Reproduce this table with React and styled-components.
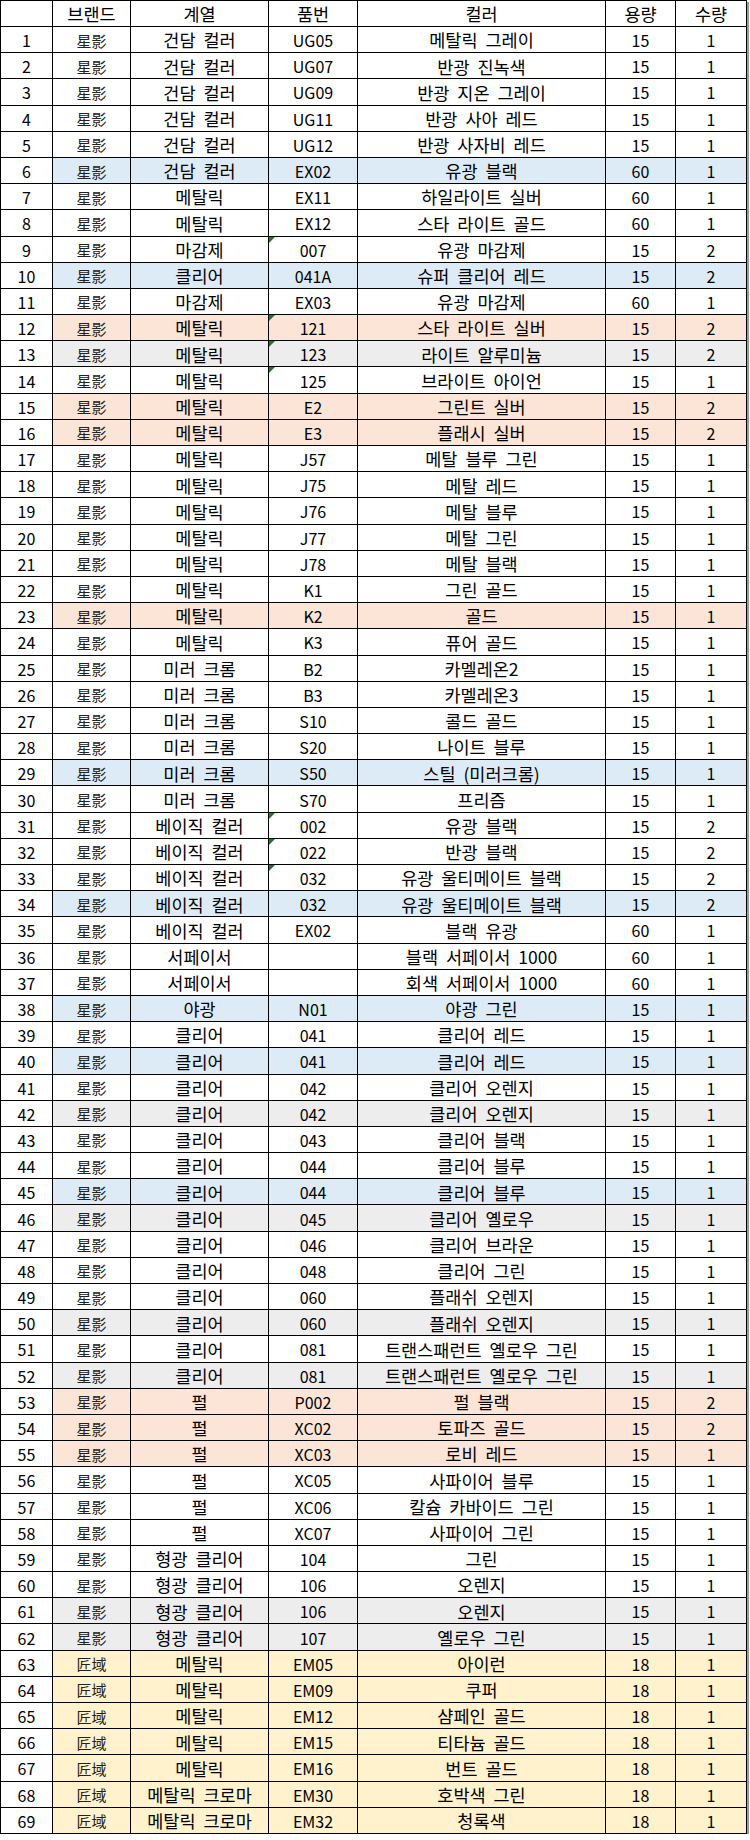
import styled, { createGlobalStyle } from "styled-components";

const GlobalStyle = createGlobalStyle`
  html, body {
    margin: 0;
    padding: 0;
    background: #fff;
  }
  body {
    font-family: "Noto Sans CJK KR", "Noto Sans", sans-serif;
    color: #000;
  }
`;

const COLS = "52px 78px 138px 89px 248px 70px 71px";

const fills = {
  b: "#ddebf7",
  p: "#fce4d6",
  g: "#ededed",
  y: "#fff2cc",
};

const head = ["", "브랜드", "계열", "품번", "컬러", "용량", "수량"];

// no, brand, series, code, colour, ml, qty, fill, text-number flag
const rows = [
  [1, "星影", "건담 컬러", "UG05", "메탈릭 그레이", 15, 1],
  [2, "星影", "건담 컬러", "UG07", "반광 진녹색", 15, 1],
  [3, "星影", "건담 컬러", "UG09", "반광 지온 그레이", 15, 1],
  [4, "星影", "건담 컬러", "UG11", "반광 사아 레드", 15, 1],
  [5, "星影", "건담 컬러", "UG12", "반광 사자비 레드", 15, 1],
  [6, "星影", "건담 컬러", "EX02", "유광 블랙", 60, 1, "b"],
  [7, "星影", "메탈릭", "EX11", "하일라이트 실버", 60, 1],
  [8, "星影", "메탈릭", "EX12", "스타 라이트 골드", 60, 1],
  [9, "星影", "마감제", "007", "유광 마감제", 15, 2, "", true],
  [10, "星影", "클리어", "041A", "슈퍼 클리어 레드", 15, 2, "b"],
  [11, "星影", "마감제", "EX03", "유광 마감제", 60, 1],
  [12, "星影", "메탈릭", "121", "스타 라이트 실버", 15, 2, "p", true],
  [13, "星影", "메탈릭", "123", "라이트 알루미늄", 15, 2, "g", true],
  [14, "星影", "메탈릭", "125", "브라이트 아이언", 15, 1, "", true],
  [15, "星影", "메탈릭", "E2", "그린트 실버", 15, 2, "p"],
  [16, "星影", "메탈릭", "E3", "플래시 실버", 15, 2, "p"],
  [17, "星影", "메탈릭", "J57", "메탈 블루 그린", 15, 1],
  [18, "星影", "메탈릭", "J75", "메탈 레드", 15, 1],
  [19, "星影", "메탈릭", "J76", "메탈 블루", 15, 1],
  [20, "星影", "메탈릭", "J77", "메탈 그린", 15, 1],
  [21, "星影", "메탈릭", "J78", "메탈 블랙", 15, 1],
  [22, "星影", "메탈릭", "K1", "그린 골드", 15, 1],
  [23, "星影", "메탈릭", "K2", "골드", 15, 1, "p"],
  [24, "星影", "메탈릭", "K3", "퓨어 골드", 15, 1],
  [25, "星影", "미러 크롬", "B2", "카멜레온2", 15, 1],
  [26, "星影", "미러 크롬", "B3", "카멜레온3", 15, 1],
  [27, "星影", "미러 크롬", "S10", "콜드 골드", 15, 1],
  [28, "星影", "미러 크롬", "S20", "나이트 블루", 15, 1],
  [29, "星影", "미러 크롬", "S50", "스틸 (미러크롬)", 15, 1, "b"],
  [30, "星影", "미러 크롬", "S70", "프리즘", 15, 1],
  [31, "星影", "베이직 컬러", "002", "유광 블랙", 15, 2, "", true],
  [32, "星影", "베이직 컬러", "022", "반광 블랙", 15, 2, "", true],
  [33, "星影", "베이직 컬러", "032", "유광 울티메이트 블랙", 15, 2, "", true],
  [34, "星影", "베이직 컬러", "032", "유광 울티메이트 블랙", 15, 2, "b"],
  [35, "星影", "베이직 컬러", "EX02", "블랙 유광", 60, 1],
  [36, "星影", "서페이서", "", "블랙 서페이서 1000", 60, 1],
  [37, "星影", "서페이서", "", "회색 서페이서 1000", 60, 1],
  [38, "星影", "야광", "N01", "야광 그린", 15, 1, "b"],
  [39, "星影", "클리어", "041", "클리어 레드", 15, 1],
  [40, "星影", "클리어", "041", "클리어 레드", 15, 1, "b"],
  [41, "星影", "클리어", "042", "클리어 오렌지", 15, 1],
  [42, "星影", "클리어", "042", "클리어 오렌지", 15, 1, "g"],
  [43, "星影", "클리어", "043", "클리어 블랙", 15, 1],
  [44, "星影", "클리어", "044", "클리어 블루", 15, 1],
  [45, "星影", "클리어", "044", "클리어 블루", 15, 1, "b"],
  [46, "星影", "클리어", "045", "클리어 옐로우", 15, 1, "g"],
  [47, "星影", "클리어", "046", "클리어 브라운", 15, 1],
  [48, "星影", "클리어", "048", "클리어 그린", 15, 1],
  [49, "星影", "클리어", "060", "플래쉬 오렌지", 15, 1],
  [50, "星影", "클리어", "060", "플래쉬 오렌지", 15, 1, "g"],
  [51, "星影", "클리어", "081", "트랜스패런트 옐로우 그린", 15, 1],
  [52, "星影", "클리어", "081", "트랜스패런트 옐로우 그린", 15, 1, "g"],
  [53, "星影", "펄", "P002", "펄 블랙", 15, 2, "p"],
  [54, "星影", "펄", "XC02", "토파즈 골드", 15, 2, "p"],
  [55, "星影", "펄", "XC03", "로비 레드", 15, 1, "p"],
  [56, "星影", "펄", "XC05", "사파이어 블루", 15, 1],
  [57, "星影", "펄", "XC06", "칼슘 카바이드 그린", 15, 1],
  [58, "星影", "펄", "XC07", "사파이어 그린", 15, 1],
  [59, "星影", "형광 클리어", "104", "그린", 15, 1],
  [60, "星影", "형광 클리어", "106", "오렌지", 15, 1],
  [61, "星影", "형광 클리어", "106", "오렌지", 15, 1, "g"],
  [62, "星影", "형광 클리어", "107", "옐로우 그린", 15, 1, "g"],
  [63, "匠域", "메탈릭", "EM05", "아이런", 18, 1, "y"],
  [64, "匠域", "메탈릭", "EM09", "쿠퍼", 18, 1, "y"],
  [65, "匠域", "메탈릭", "EM12", "샴페인 골드", 18, 1, "y"],
  [66, "匠域", "메탈릭", "EM15", "티타늄 골드", 18, 1, "y"],
  [67, "匠域", "메탈릭", "EM16", "번트 골드", 18, 1, "y"],
  [68, "匠域", "메탈릭 크로마", "EM30", "호박색 그린", 18, 1, "y"],
  [69, "匠域", "메탈릭 크로마", "EM32", "청록색", 18, 1, "y"],
];

const Sheet = styled.div`
  width: max-content;
  border-top: 1px solid #000;
  border-left: 1px solid #000;
  box-shadow: 2px 2px 0 #9a9a9a;
`;

const Row = styled.div`
  display: grid;
  grid-template-columns: ${COLS};
  height: ${(p) => (p.$head ? 26 : 26.2)}px;
`;

const Cell = styled.div`
  position: relative;
  display: flex;
  align-items: center;
  justify-content: center;
  box-sizing: border-box;
  border-right: 1px solid #000;
  border-bottom: 1px solid #000;
  background: ${(p) => p.$fill || "#fff"};
  font-size: 16px;
  line-height: 1;
  white-space: nowrap;
  padding-top: 1px;

  &::before {
    content: "";
    display: ${(p) => (p.$flag ? "block" : "none")};
    position: absolute;
    top: 0;
    left: 0;
    width: 0;
    height: 0;
    border-top: 6px solid #1f7a1f;
    border-right: 6px solid transparent;
  }
`;

const KoCell = styled(Cell)`
  font-size: 17.5px;
  word-spacing: 4px;
`;

const HanCell = styled(Cell)`
  font-size: 15px;
  color: #222;
`;

function App() {
  return (
    <>
      <GlobalStyle />
      <Sheet>
        <Row $head>
          {head.map((h, i) => (
            <KoCell key={i}>{h}</KoCell>
          ))}
        </Row>
        {rows.map(([no, brand, series, code, color, ml, qty, tone, flag]) => {
          const fill = fills[tone];
          return (
            <Row key={no}>
              <Cell>{no}</Cell>
              <HanCell $fill={fill}>{brand}</HanCell>
              <KoCell $fill={fill}>{series}</KoCell>
              <Cell $fill={fill} $flag={flag}>
                {code}
              </Cell>
              <KoCell $fill={fill}>{color}</KoCell>
              <Cell $fill={fill}>{ml}</Cell>
              <Cell $fill={fill}>{qty}</Cell>
            </Row>
          );
        })}
      </Sheet>
    </>
  );
}

export default App;
